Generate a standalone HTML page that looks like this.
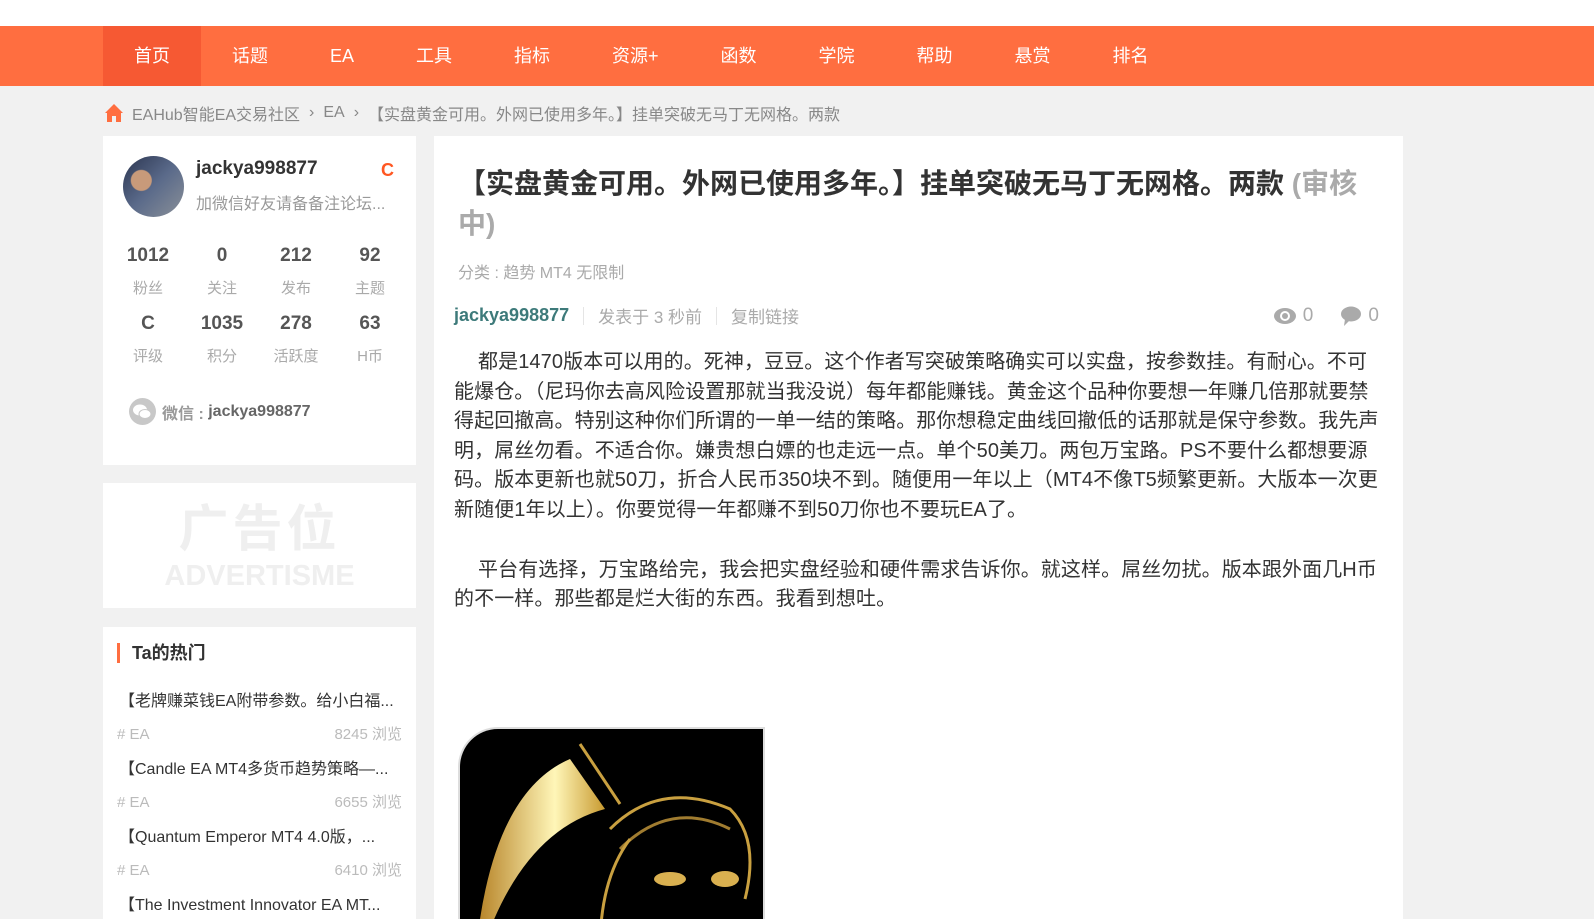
<!DOCTYPE html>
<html><head><meta charset="utf-8">
<style>
*{margin:0;padding:0;box-sizing:border-box}
html,body{width:1594px;height:919px;overflow:hidden}
body{background:#f1f1f1;font-family:"Liberation Sans","Noto Sans CJK SC",sans-serif;color:#333;position:relative}
.top{height:26px;background:#fff}
.nav{height:60px;background:#ff6e40;padding-left:103px;display:flex}
.nav a{display:block;height:60px;line-height:60px;padding:0 31px;color:#fff;font-size:18px;text-decoration:none}
.nav a.on{background:#f65933}
.bc{height:50px;padding-top:3px;padding-left:104px;font-size:16px;color:#888;display:flex;align-items:center}
.bc svg{margin-right:8px}
.bc span.s{margin:0 9px}
.side{position:absolute;left:103px;top:136px;width:313px;height:783px;overflow:hidden}
.card{background:#fff}
.c1{height:329px;position:relative}
.av{position:absolute;left:20px;top:20px;width:61px;height:61px;border-radius:50%;background:radial-gradient(circle at 30% 40%,#c89a7a 0 10px,transparent 11px),linear-gradient(135deg,#2b3550,#5a6a8a 50%,#8a9098);overflow:hidden}
.un{position:absolute;left:93px;top:22px;font-size:19px;font-weight:bold;color:#333}
.lv{position:absolute;right:22px;top:24px;color:#ff5722;font-weight:bold;font-size:18px}
.sig{position:absolute;left:93px;top:54px;font-size:16px;color:#999}
.grid{position:absolute;left:8px;top:104px;width:296px;display:grid;grid-template-columns:repeat(4,1fr);row-gap:2px}
.grid div{text-align:center}
.grid b{display:block;font-size:19px;color:#555;line-height:32px}
.grid i{display:block;font-style:normal;font-size:15px;color:#aaa;line-height:34px}
.wx{position:absolute;left:26px;top:262px;display:flex;align-items:center;font-size:16px;color:#999;font-weight:bold}
.wx b{color:#666}
.wx .ic{width:27px;height:27px;border-radius:50%;background:#c8c8c8;margin-right:6px;position:relative}
.ad{margin-top:18px;height:125px;text-align:center;color:#efefef;font-weight:bold}
.ad .a1{font-size:50px;padding-top:18px;line-height:56px;letter-spacing:4px}
.ad .a2{font-size:29px;line-height:38px;font-family:"Liberation Sans",sans-serif}
.hot{margin-top:19px;height:292px;padding:10px 14px;overflow:hidden}
.hot h3{font-size:18px;border-left:3px solid #ff6e40;padding-left:12px;line-height:20px;margin:6px 0 0 0}
.it{margin-top:24px}
.it .t{font-size:16px;color:#333;white-space:nowrap;overflow:hidden;padding-left:2px}
.it .m{display:flex;justify-content:space-between;align-items:baseline;font-size:15px;color:#bbb;margin-top:12px}
.it+.it{margin-top:11px}
.main{position:absolute;left:434px;top:136px;width:969px;height:783px;overflow:hidden;background:#fff;padding:0 24px 0 20px}
h1{font-size:28px;line-height:40px;padding-top:28px;padding-left:4px;color:#333}
h1 span{color:#aaa}
.cat{font-size:16px;color:#aaa;margin-top:15px;padding-left:4px}
.meta{margin-top:20px;display:flex;align-items:center;font-size:17px;color:#aaa}
.meta .u{color:#3d7a7a;font-weight:bold;font-size:18px}
.meta .sp{width:1px;height:18px;background:#e5e5e5;margin:0 14px}
.meta .r{margin-left:auto;display:flex;align-items:center;gap:6px;font-size:19px}
.txt{margin-top:20px;font-size:20px;letter-spacing:0.1px;line-height:29.6px;color:#333;text-indent:1.2em}
.img{position:absolute;left:24px;top:591px;width:307px;height:192px;background:#000;border-top-left-radius:40px;border:2px solid #ddd;border-bottom:none;overflow:hidden}
</style></head><body>
<div class="top"></div>
<div class="nav"><a class="on">首页</a><a>话题</a><a>EA</a><a>工具</a><a>指标</a><a>资源+</a><a>函数</a><a>学院</a><a>帮助</a><a>悬赏</a><a>排名</a></div>
<div class="bc"><svg width="20" height="20" viewBox="0 0 20 20"><path d="M10 1 L1 10 L3 10 L3 19 L8 19 L8 13 L12 13 L12 19 L17 19 L17 10 L19 10 Z" fill="#ff6e40"/></svg>EAHub智能EA交易社区<span class="s">›</span>EA<span class="s">›</span>【实盘黄金可用。外网已使用多年。】挂单突破无马丁无网格。两款</div>
<div class="side">
 <div class="card c1">
  <div class="av"></div>
  <div class="un">jackya998877</div><div class="lv">C</div>
  <div class="sig">加微信好友请备备注论坛...</div>
  <div class="grid">
   <div><b>1012</b><i>粉丝</i></div><div><b>0</b><i>关注</i></div><div><b>212</b><i>发布</i></div><div><b>92</b><i>主题</i></div>
   <div><b>C</b><i>评级</i></div><div><b>1035</b><i>积分</i></div><div><b>278</b><i>活跃度</i></div><div><b>63</b><i>H币</i></div>
  </div>
  <div class="wx"><span class="ic"><svg width="27" height="27" viewBox="0 0 27 27"><ellipse cx="11" cy="12" rx="7" ry="5.5" fill="#fff"/><ellipse cx="16" cy="16" rx="6" ry="4.5" fill="#fff" stroke="#c8c8c8"/></svg></span>微信 : <b>&nbsp;jackya998877</b></div>
 </div>
 <div class="card ad"><div class="a1">广告位</div><div class="a2">ADVERTISME</div></div>
 <div class="card hot">
  <h3>Ta的热门</h3>
  <div class="it"><div class="t">【老牌赚菜钱EA附带参数。给小白福...</div><div class="m"><span># EA</span><span>8245 浏览</span></div></div>
  <div class="it"><div class="t">【Candle EA MT4多货币趋势策略—...</div><div class="m"><span># EA</span><span>6655 浏览</span></div></div>
  <div class="it"><div class="t">【Quantum Emperor MT4 4.0版，...</div><div class="m"><span># EA</span><span>6410 浏览</span></div></div>
  <div class="it"><div class="t">【The Investment Innovator EA MT...</div></div>
 </div>
</div>
<div class="main">
 <h1>【实盘黄金可用。外网已使用多年。】挂单突破无马丁无网格。两款 <span>(审核中)</span></h1>
 <div class="cat">分类 : 趋势 MT4 无限制</div>
 <div class="meta"><span class="u">jackya998877</span><span class="sp"></span>发表于 3 秒前<span class="sp"></span>复制链接
  <span class="r"><svg width="24" height="18" viewBox="0 0 24 18"><ellipse cx="12" cy="9" rx="11" ry="8" fill="#aaa"/><circle cx="12" cy="9" r="5" fill="#fff"/><circle cx="12" cy="9" r="3" fill="#aaa"/></svg>0&nbsp;&nbsp;&nbsp;&nbsp;<svg width="22" height="20" viewBox="0 0 22 20"><ellipse cx="11" cy="8" rx="10" ry="7.5" fill="#aaa"/><path d="M5 13 L4 20 L10 14 Z" fill="#aaa"/></svg>0</span></div>
 <p class="txt">都是1470版本可以用的。死神，豆豆。这个作者写突破策略确实可以实盘，按参数挂。有耐心。不可能爆仓。（尼玛你去高风险设置那就当我没说）每年都能赚钱。黄金这个品种你要想一年赚几倍那就要禁得起回撤高。特别这种你们所谓的一单一结的策略。那你想稳定曲线回撤低的话那就是保守参数。我先声明，屌丝勿看。不适合你。嫌贵想白嫖的也走远一点。单个50美刀。两包万宝路。PS不要什么都想要源码。版本更新也就50刀，折合人民币350块不到。随便用一年以上（MT4不像T5频繁更新。大版本一次更新随便1年以上）。你要觉得一年都赚不到50刀你也不要玩EA了。</p>
 <p class="txt" style="margin-top:30px">平台有选择，万宝路给完，我会把实盘经验和硬件需求告诉你。就这样。屌丝勿扰。版本跟外面几H币的不一样。那些都是烂大街的东西。我看到想吐。</p>
 <div class="img"><svg width="307" height="192" viewBox="0 0 307 192"><defs><linearGradient id="g" x1="0" x2="1"><stop offset="0" stop-color="#b8862b"/><stop offset=".6" stop-color="#fff6b8"/><stop offset="1" stop-color="#c89a30"/></linearGradient></defs><path d="M20 190 Q40 60 110 30 L145 80 Q70 100 30 200 Z" fill="url(#g)"/><path d="M120 15 L160 75" stroke="#c9a040" stroke-width="3"/><path d="M150 100 Q200 50 270 80 Q300 110 285 170" stroke="#c9a040" stroke-width="3" fill="none"/><path d="M160 120 Q210 70 270 100" stroke="#a07c30" stroke-width="3" fill="none"/><path d="M140 220 Q140 150 170 110" stroke="#c9a040" stroke-width="3" fill="none"/><ellipse cx="210" cy="150" rx="16" ry="7" fill="#d9b050"/><ellipse cx="265" cy="150" rx="14" ry="8" fill="#d9b050"/></svg></div>
</div>
</body></html>
